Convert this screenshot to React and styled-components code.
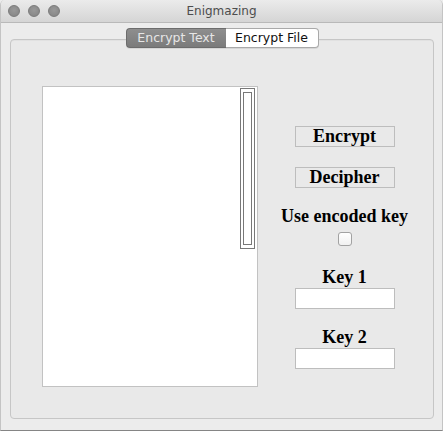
import React, { useState } from 'react';
import styled, { createGlobalStyle } from 'styled-components';

const GlobalStyle = createGlobalStyle`
  html, body {
    margin: 0;
    padding: 0;
    background: #ececec;
  }
  * {
    box-sizing: border-box;
  }
`;

const Window = styled.div`
  width: 443px;
  height: 431px;
  background: #ececec;
  border-left: 1px solid #c4c4c4;
  border-right: 1px solid #c4c4c4;
  border-bottom: 1px solid #858585;
  border-radius: 5px 5px 0 0;
  display: flex;
  flex-direction: column;
  overflow: hidden;
`;

const TitleBar = styled.div`
  position: relative;
  height: 23px;
  flex-shrink: 0;
  display: flex;
  align-items: center;
  justify-content: center;
  background: linear-gradient(#ebebeb, #d5d5d5);
  border-bottom: 1px solid #b9b9b9;
  font-family: "DejaVu Sans", sans-serif;
  font-size: 12px;
  color: #4d4d4d;
`;

const Lights = styled.div`
  position: absolute;
  left: 7px;
  top: 5px;
  display: flex;
  gap: 8px;
`;

const Light = styled.span`
  width: 12px;
  height: 12px;
  border-radius: 50%;
  background: radial-gradient(circle at 50% 40%, #999 0%, #8a8a8a 70%);
  border: 1px solid #7a7a7a;
`;

const Body = styled.div`
  flex: 1;
  display: flex;
  flex-direction: column;
  padding: 5px 8px 11px 9px;
`;

const TabBar = styled.div`
  position: relative;
  z-index: 1;
  display: flex;
  justify-content: center;
  margin-bottom: -9px;
`;

const Tab = styled.button`
  height: 20px;
  width: ${({ $w }) => $w}px;
  padding: 0;
  font-family: "DejaVu Sans", sans-serif;
  font-size: 12.5px;
  line-height: 18px;
  border: 1px solid ${({ $active }) => ($active ? '#6c6c6c' : '#a9a9a9')};
  background: ${({ $active }) => ($active ? 'linear-gradient(#8e8e8e, #7b7b7b)' : '#ffffff')};
  color: ${({ $active }) => ($active ? '#e6e6e6' : '#111')};
  border-radius: ${({ $first }) => ($first ? '4px 0 0 4px' : '0 4px 4px 0')};
  ${({ $first }) => ($first ? 'border-right: none;' : 'border-left: none;')}
  box-shadow: 0 1px 0 rgba(0, 0, 0, 0.08);
`;

const Pane = styled.div`
  flex: 1;
  display: flex;
  align-items: flex-start;
  background: #e9e9e9;
  border: 1px solid #c6c6c6;
  border-radius: 4px;
  box-shadow: inset 0 1px 0 #e1e1e1;
  padding: 46px 0 0 31px;
`;

const TextBox = styled.div`
  width: 216px;
  height: 301px;
  background: #fff;
  border: 1px solid #c2c2c2;
  display: flex;
  justify-content: flex-end;
  align-items: flex-start;
  padding: 1px 2px;
`;

const ScrollTrack = styled.div`
  width: 15px;
  height: 161px;
  border: 1px solid #787878;
  padding: 3px 2px;
  display: flex;
`;

const ScrollThumb = styled.div`
  flex: 1;
  border: 1px solid #787878;
`;

const Controls = styled.div`
  flex: 1;
  display: flex;
  flex-direction: column;
  align-items: center;
  margin-top: 40px;
  margin-right: 2px;
  font-family: "Liberation Serif", serif;
  font-weight: bold;
  font-size: 18px;
  color: #000;
`;

const ActionButton = styled.button`
  width: 100px;
  height: 21px;
  margin-bottom: ${({ $mb }) => $mb}px;
  padding: 0;
  background: transparent;
  border: 1px solid #bdbdbd;
  font: inherit;
  line-height: 19px;
  color: #000;
`;

const Label = styled.div`
  line-height: 21px;
  margin-top: ${({ $mt }) => $mt || 0}px;
`;

const Check = styled.span`
  width: 14px;
  height: 14px;
  margin-top: 5px;
  border-radius: 3px;
  border: 1px solid #a2a2a2;
  background: linear-gradient(#ffffff, #f1f1f1);
`;

const KeyInput = styled.input`
  width: 100px;
  height: 21px;
  border: 1px solid #bdbdbd;
  background: #fff;
  margin-top: 0;
  padding: 0 3px;
  outline: none;
`;

export default function App() {
  const [tab, setTab] = useState(0);
  return (
    <>
      <GlobalStyle />
      <Window>
        <TitleBar>
          <Lights>
            <Light />
            <Light />
            <Light />
          </Lights>
          Enigmazing
        </TitleBar>
        <Body>
          <TabBar>
            <Tab $first $w={100} $active={tab === 0} onClick={() => setTab(0)}>
              Encrypt Text
            </Tab>
            <Tab $w={93} $active={tab === 1} onClick={() => setTab(1)}>
              Encrypt File
            </Tab>
          </TabBar>
          <Pane>
            <TextBox>
              <ScrollTrack>
                <ScrollThumb />
              </ScrollTrack>
            </TextBox>
            <Controls>
              <ActionButton $mb={20}>Encrypt</ActionButton>
              <ActionButton $mb={0}>Decipher</ActionButton>
              <Label $mt={18}>Use encoded key</Label>
              <Check />
              <Label $mt={21}>Key 1</Label>
              <KeyInput />
              <Label $mt={18}>Key 2</Label>
              <KeyInput />
            </Controls>
          </Pane>
        </Body>
      </Window>
    </>
  );
}
